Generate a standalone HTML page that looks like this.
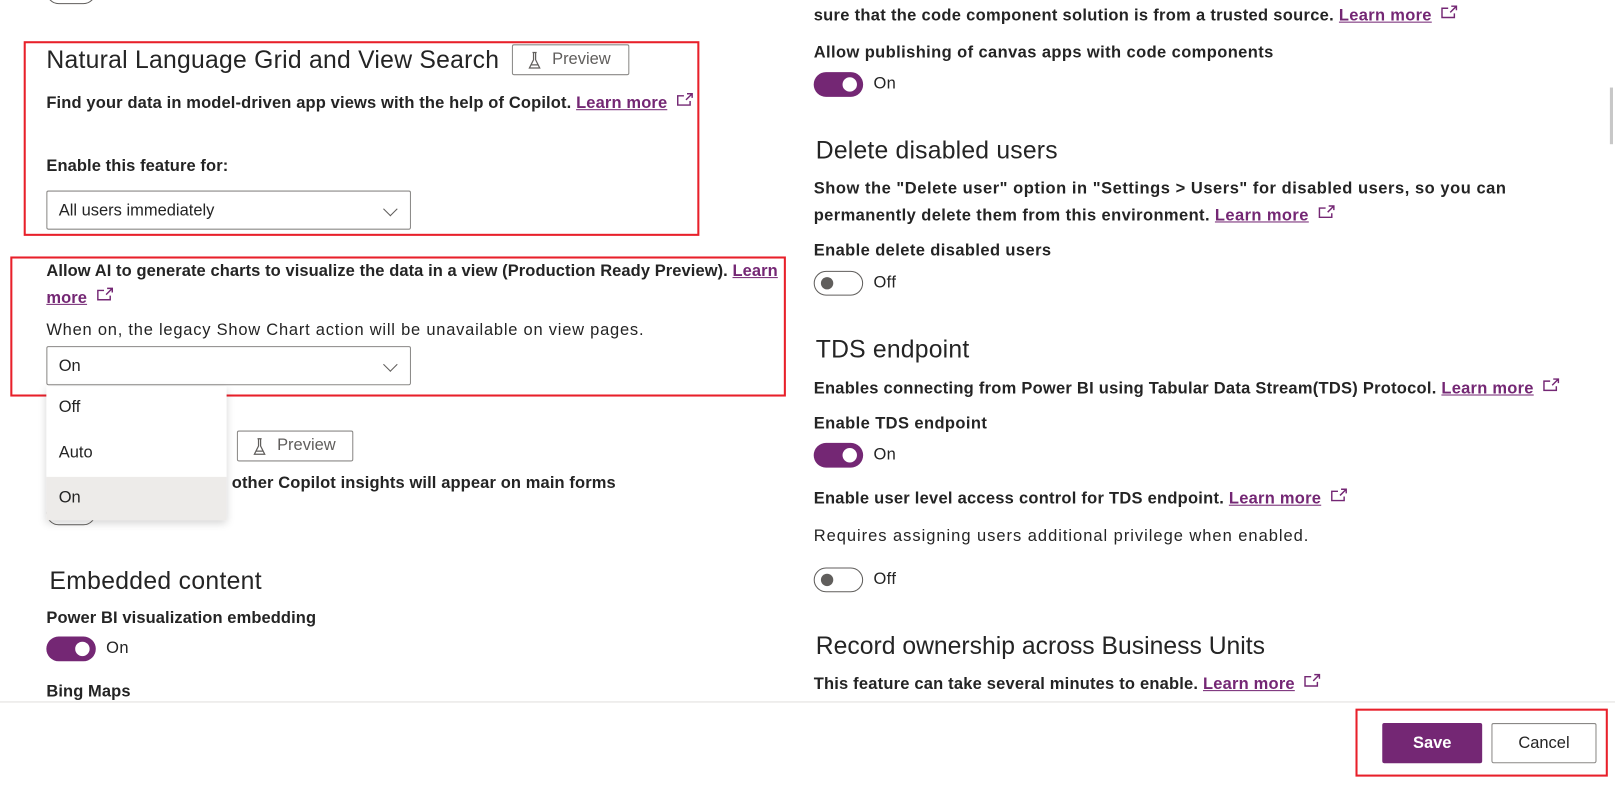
<!DOCTYPE html>
<html><head><meta charset="utf-8"><style>
html,body{margin:0;padding:0;background:#fff;width:1615px;height:786px;overflow:hidden}
#w{position:absolute;left:0;top:0;width:1568px;height:763px;transform:scale(1.03);transform-origin:0 0;font-family:"Liberation Sans",sans-serif;color:#242424}
.a{position:absolute;white-space:nowrap;line-height:20px}
.L{font-size:16px;font-weight:bold;letter-spacing:0.1px;color:#242424}
.Ln{font-size:16px;letter-spacing:0.75px;color:#242424}
.R{font-size:16px;font-weight:bold;letter-spacing:0.5px;color:#242424}
.Rn{font-size:16px;letter-spacing:0.95px;color:#242424}
.h{font-size:24px;line-height:30px;color:#242424}
a{color:#742774;text-decoration:underline;font-weight:bold}
.ext{display:inline-block;width:17px;height:13px;margin-left:9px;vertical-align:2px}
.box{position:absolute;border:2px solid #e8202a}
.dd{position:absolute;border:1px solid #8a8886;border-radius:2px;background:#fff;box-sizing:border-box}
.dd span{position:absolute;left:11px;top:9px;font-size:16px;line-height:20px}
.chev{position:absolute;right:14px;top:12px;width:9px;height:9px;border-right:1px solid #605e5c;border-bottom:1px solid #605e5c;transform:rotate(45deg)}
.pv{position:absolute;border:1px solid #8a8886;border-radius:2px;box-sizing:border-box;font-size:16px;color:#605e5c;line-height:28px;padding-left:38px}
.pv svg{position:absolute;left:15px;top:6px}
.tg{position:absolute;width:48px;height:24px;border-radius:12px;box-sizing:border-box}
.on{background:#742774}
.on:after{content:"";position:absolute;right:6px;top:5px;width:14px;height:14px;border-radius:50%;background:#fff}
.off{border:1px solid #605e5c;background:#fff}
.off:after{content:"";position:absolute;left:6px;top:5px;width:12px;height:12px;border-radius:50%;background:#605e5c}
.tl{position:absolute;font-size:16px;line-height:20px;letter-spacing:0.4px}
</style></head><body>
<svg width="0" height="0" style="position:absolute"><defs>
<symbol id="ex" viewBox="0 0 17 13"><path d="M7 3H1V12H13V8M10 1H15V5M15 1L9 7" fill="none" stroke="#742774" stroke-width="1.4"/></symbol>
<symbol id="fl" viewBox="0 0 12 18"><path d="M4 1H8M5 1V8L1 16H11L7 8V1M2.5 13H9.5" fill="none" stroke="#605e5c" stroke-width="1.2"/></symbol>
</defs></svg>
<div id="w">
<div style="position:absolute;left:0;top:0;width:1568px;height:681px;overflow:hidden">
<div class="tg off" style="left:45px;top:-20px"></div>

<div class="box" style="left:23px;top:40px;width:652px;height:185px"></div>
<div class="a h" style="left:45px;top:44px;letter-spacing:0.25px">Natural Language Grid and View Search</div>
<div class="pv" style="left:497px;top:43px;width:114px;height:30px"><svg width="12" height="18"><use href="#fl"/></svg>Preview</div>
<div class="a L" style="left:45px;top:90px;letter-spacing:0.14px">Find your data in model-driven app views with the help of Copilot. <a>Learn more</a><svg class="ext"><use href="#ex"/></svg></div>
<div class="a L" style="left:45px;top:152px">Enable this feature for:</div>
<div class="dd" style="left:45px;top:185px;width:354px;height:38px"><span>All users immediately</span><i class="chev"></i></div>

<div class="box" style="left:10px;top:249px;width:749px;height:132px"></div>
<div class="a L" style="left:45px;top:254px;letter-spacing:0.08px">Allow AI to generate charts to visualize the data in a view (Production Ready Preview). <a>Learn</a></div>
<div class="a L" style="left:45px;top:279px"><a>more</a><svg class="ext"><use href="#ex"/></svg></div>
<div class="a Ln" style="left:45px;top:311px">When on, the legacy Show Chart action will be unavailable on view pages.</div>
<div class="dd" style="left:45px;top:336px;width:354px;height:38px"><span>On</span><i class="chev"></i></div>

<div class="pv" style="left:230px;top:418px;width:113px;height:30px"><svg width="12" height="18"><use href="#fl"/></svg>Preview</div>
<div class="a L" style="left:225px;top:460px;letter-spacing:0.12px">other Copilot insights will appear on main forms</div>
<div class="tg off" style="left:45px;top:486px"></div>
<div style="position:absolute;left:45px;top:375px;width:175px;height:130px;background:#fff;box-shadow:0 3px 8px rgba(0,0,0,.18);font-size:16px">
<div style="position:absolute;left:12px;top:12px">Off</div>
<div style="position:absolute;left:12px;top:56px">Auto</div>
<div style="position:absolute;left:0;top:88px;width:175px;height:42px;background:#edebe9"></div>
<div style="position:absolute;left:12px;top:100px">On</div>
</div>

<div class="a h" style="left:48px;top:550px;letter-spacing:0.3px">Embedded content</div>
<div class="a L" style="left:45px;top:591px">Power BI visualization embedding</div>
<div class="tg on" style="left:45px;top:618px"></div><div class="tl" style="left:103px;top:620px">On</div>
<div class="a L" style="left:45px;top:662px">Bing Maps</div>

<!-- right -->
<div class="a R" style="left:790px;top:5px;letter-spacing:0.3px">sure that the code component solution is from a trusted source. <a>Learn more</a><svg class="ext"><use href="#ex"/></svg></div>
<div class="a R" style="left:790px;top:42px;letter-spacing:0.4px">Allow publishing of canvas apps with code components</div>
<div class="tg on" style="left:790px;top:70px"></div><div class="tl" style="left:848px;top:72px">On</div>
<div class="a h" style="left:792px;top:132px;letter-spacing:0.2px">Delete disabled users</div>
<div class="a R" style="left:790px;top:174px;letter-spacing:0.53px">Show the "Delete user" option in "Settings &gt; Users" for disabled users, so you can</div>
<div class="a R" style="left:790px;top:199px;letter-spacing:0.4px">permanently delete them from this environment. <a>Learn more</a><svg class="ext"><use href="#ex"/></svg></div>
<div class="a R" style="left:790px;top:234px;letter-spacing:0.4px">Enable delete disabled users</div>
<div class="tg off" style="left:790px;top:263px"></div><div class="tl" style="left:848px;top:265px">Off</div>
<div class="a h" style="left:792px;top:325px;letter-spacing:0.2px">TDS endpoint</div>
<div class="a R" style="left:790px;top:367px;letter-spacing:0.25px">Enables connecting from Power BI using Tabular Data Stream(TDS) Protocol. <a>Learn more</a><svg class="ext"><use href="#ex"/></svg></div>
<div class="a R" style="left:790px;top:402px;letter-spacing:0.4px">Enable TDS endpoint</div>
<div class="tg on" style="left:790px;top:430px"></div><div class="tl" style="left:848px;top:432px">On</div>
<div class="a R" style="left:790px;top:474px;letter-spacing:0.25px">Enable user level access control for TDS endpoint. <a>Learn more</a><svg class="ext"><use href="#ex"/></svg></div>
<div class="a Rn" style="left:790px;top:511px">Requires assigning users additional privilege when enabled.</div>
<div class="tg off" style="left:790px;top:551px"></div><div class="tl" style="left:848px;top:553px">Off</div>
<div class="a h" style="left:792px;top:613px;letter-spacing:0px">Record ownership across Business Units</div>
<div class="a R" style="left:790px;top:654px;letter-spacing:0.2px">This feature can take several minutes to enable. <a>Learn more</a><svg class="ext"><use href="#ex"/></svg></div>
<div style="position:absolute;left:1563px;top:85px;width:3px;height:55px;background:#c8c8c8"></div>
</div>
<div style="position:absolute;left:0;top:681px;width:1568px;height:1px;background:#e1dfdd"></div>
<div class="box" style="left:1316px;top:688px;width:241px;height:62px"></div>
<div style="position:absolute;left:1342px;top:702px;width:97px;height:39px;background:#742774;border-radius:2px;color:#fff;font-weight:bold;font-size:16px;text-align:center;line-height:39px">Save</div>
<div style="position:absolute;left:1448px;top:702px;width:102px;height:39px;border:1px solid #8a8886;border-radius:2px;box-sizing:border-box;font-size:16px;text-align:center;line-height:37px;color:#242424">Cancel</div>
</div></body></html>
